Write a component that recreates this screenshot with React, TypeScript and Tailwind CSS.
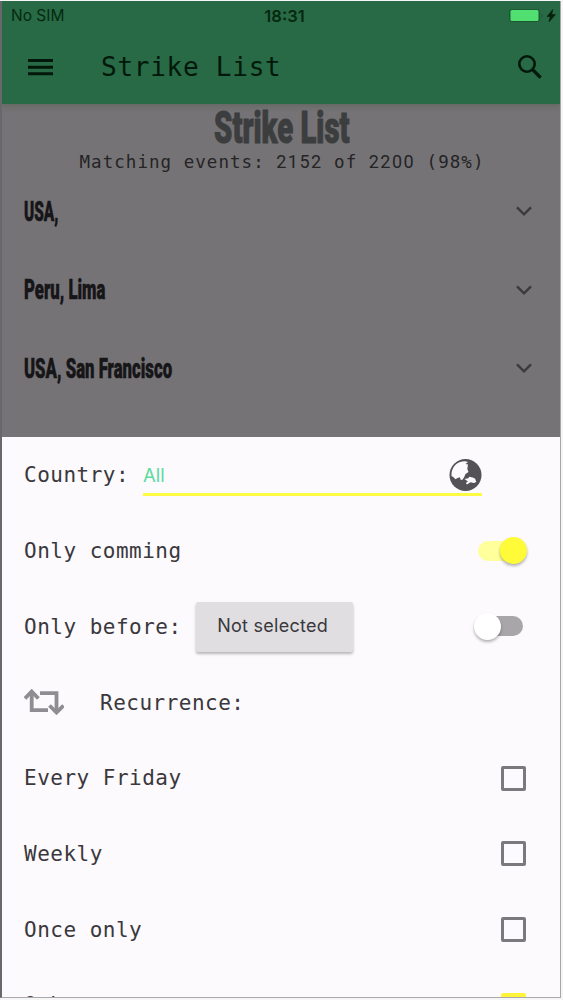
import type { ReactNode } from "react";
import { clsx } from "clsx";

const places = [
  { name: "USA,", scale: "scale-x-[0.57]" },
  { name: "Peru, Lima", scale: "scale-x-[0.62]" },
  { name: "USA, San Francisco", scale: "scale-x-[0.62]" },
];

const recurrences = [
  { label: "Every Friday", checked: false },
  { label: "Weekly", checked: false },
  { label: "Once only", checked: false },
  { label: "Other", checked: true },
];

function StatusBar() {
  return (
    <div className="grid h-[29px] grid-cols-3 items-center pl-[9px] pr-[3px] pt-px font-[Inter,sans-serif] text-[15.5px] text-[#06280f]">
      <span>No SIM</span>
      <span className="pl-px text-center text-[16.5px] font-semibold">18:31</span>
      <svg width="48" height="16" viewBox="0 0 48 16" className="justify-self-end">
        <rect x="0" y="1" width="31" height="13" rx="3" fill="#1c5a36" />
        <rect x="1.5" y="2" width="28" height="11" rx="1.5" fill="#52df72" />
        <path d="M32.5 6v4q1.5-.5 1.5-2t-1.5-2z" fill="#1c5a36" />
        <path d="M43.8 1.5L38 8.5h3.2L40 14l6.4-7.4h-3.6z" fill="#06200c" stroke="#06200c" strokeWidth=".6" />
      </svg>
    </div>
  );
}

function Toolbar() {
  return (
    <div className="flex h-[74px] items-center pl-[26px] pr-[17px] text-[#03180a]">
      <svg width="25" height="18" viewBox="0 0 25 18" fill="currentColor" className="mb-px">
        <path d="M0 1h25v3H0zM0 7.7h25v3H0zM0 14.3h25v3H0z" />
      </svg>
      <h1 className="ml-[48px] font-['DejaVu_Sans_Mono',monospace] text-[26px] tracking-[0.75px]">Strike List</h1>
      <svg width="26" height="26" viewBox="0 0 26 26" className="mb-px ml-auto" fill="none" stroke="currentColor">
        <circle cx="10" cy="10" r="7.7" strokeWidth="2.6" />
        <path d="M15.6 15.6l8 8" strokeWidth="3.4" />
      </svg>
    </div>
  );
}

function Place({ name, scale }: { name: string; scale: string }) {
  return (
    <div className="flex h-[78.4px] items-center justify-between pl-[22px] pr-[28px]">
      <span
        className={clsx(
          "inline-block origin-left whitespace-nowrap pt-[2px] font-[Roboto,sans-serif] text-[27px] font-black text-[#161518] [-webkit-text-stroke:0.5px]",
          scale,
        )}
      >
        {name}
      </span>
      <svg width="16" height="10" viewBox="0 0 16 10" fill="none" stroke="#3b3a3c" strokeWidth="2.4">
        <path d="M1 1.3l7 7 7-7" />
      </svg>
    </div>
  );
}

function Row({ children }: { children: ReactNode }) {
  return <div className="flex h-[75.8px] shrink-0 items-center pl-[22px] pr-[34px]">{children}</div>;
}

function Globe() {
  return (
    <svg width="34" height="34" viewBox="0 0 34 34">
      <circle cx="17.5" cy="17" r="16" fill="#555257" />
      <path d="M3.5 18C3 9 9 3.5 17 3.3l3 .7-2.5 2 2.5.5-.7 4.5 1.2 3-3 2-1.5 3.5-1.8 2.5-1.8-.4-.4-2.3-2.5.6-2 1.3-2-2z" fill="#fcfafd" />
      <path d="M16.5 21l3.8-.8 1-1.4 3.4.7 2.5 1.2 1 3.3-2.2 1-3.5-.8-3.6 2.2-1-1.5 2-1.5z" fill="#fcfafd" />
    </svg>
  );
}

function Repeat() {
  return (
    <svg width="40" height="26" viewBox="0 0 40 26" fill="none" stroke="#8f8d91" strokeWidth="3.8">
      <path d="M7.7 3v18.2H24" />
      <path d="M1 9.5l6.7-7 6.7 7" />
      <path d="M16 4.2h16.5V22" />
      <path d="M25.5 16.5l7 7 7-7" />
    </svg>
  );
}

function Switch({ on }: { on: boolean }) {
  return (
    <div className={clsx("relative h-5 rounded-full", on ? "-mr-px w-[49px] bg-[#ffff9b]" : "mr-[3px] w-[46px] bg-[#a8a6a9]")}>
      <span
        className={clsx(
          "absolute -top-[3.5px] size-[27px] rounded-full shadow-[0_2px_3px_rgba(0,0,0,0.3)]",
          on ? "right-0 bg-[#fffb38]" : "-left-[3px] bg-white",
        )}
      />
    </div>
  );
}

export default function App() {
  return (
    <div className="h-[1000px] w-[563px] overflow-hidden bg-[#f6f6f6] pt-px">
      <div className="flex h-[997px] w-[561px] flex-col overflow-hidden border-b border-l-2 border-r border-b-[#aaa8ab] border-l-[#69676b] border-r-[#a6a5a8] bg-[#757375]">
        <header className="shrink-0 bg-[#276a45] shadow-[0_2px_5px_rgba(60,80,60,0.35)]">
          <StatusBar />
          <Toolbar />
        </header>
        <section className="h-[333px] shrink-0">
          <div className="flex h-[46px] items-center justify-center">
            <h2 className="scale-x-[0.65] whitespace-nowrap pt-px pl-[2px] font-[Roboto,sans-serif] text-[45px] font-black text-[#3b3d3e] [-webkit-text-stroke:1px]">
              Strike List
            </h2>
          </div>
          <p className="h-[22px] whitespace-pre pl-[2px] text-center font-['DejaVu_Sans_Mono',monospace] text-[17.5px] leading-[23px] tracking-[1.04px] text-[#242325]">
            {"Matching events: "}
            <span className="font-[Roboto,sans-serif] text-[18px] tracking-[1.43px]">2152</span>
            {" of "}
            <span className="font-[Roboto,sans-serif] text-[18px] tracking-[1.43px]">2200</span>
            {" (98%)"}
          </p>
          {places.map((place) => <Place key={place.name} {...place} />)}
        </section>
        <section className="flex min-h-0 flex-1 flex-col overflow-hidden bg-[#fcfafd] font-['DejaVu_Sans_Mono',monospace] text-[21px] tracking-[0.49px] text-[#3a383c]">
          <Row>
            <span className="pt-[2px]">Country:</span>
            <div className="ml-[14px] mt-[3px] flex h-[39px] w-[339px] items-center justify-between border-b-[3px] border-[#fffb45] font-[Inter,sans-serif] text-[18.5px] tracking-normal text-[#5cdc9f]">
              <span className="pt-px">All</span>
              <Globe />
            </div>
          </Row>
          <Row>
            <span className="flex-1 pt-[2px]">Only comming</span>
            <Switch on />
          </Row>
          <Row>
            <span className="pt-[2px]">Only before:</span>
            <button className="ml-[14px] mt-[2px] h-[50px] w-[157px] rounded-[2px] bg-[#e0dee1] pb-1 pr-[3px] font-[Inter,sans-serif] text-[18px] tracking-[0.25px] shadow-[0_2px_3px_rgba(0,0,0,0.28)]">
              Not selected
            </button>
            <div className="ml-auto">
              <Switch on={false} />
            </div>
          </Row>
          <Row>
            <Repeat />
            <span className="ml-[36px] pt-[2px]">Recurrence:</span>
          </Row>
          {recurrences.map(({ label, checked }) => (
            <Row key={label}>
              <span className={clsx("flex-1", checked ? "pt-px" : "pt-[2px]")}>{label}</span>
              <span className={clsx("size-[25px] rounded-[2px] border-[3px]", checked ? "border-[#fff43a] bg-[#fff43a]" : "border-[#7b797d]")} />
            </Row>
          ))}
        </section>
      </div>
    </div>
  );
}
